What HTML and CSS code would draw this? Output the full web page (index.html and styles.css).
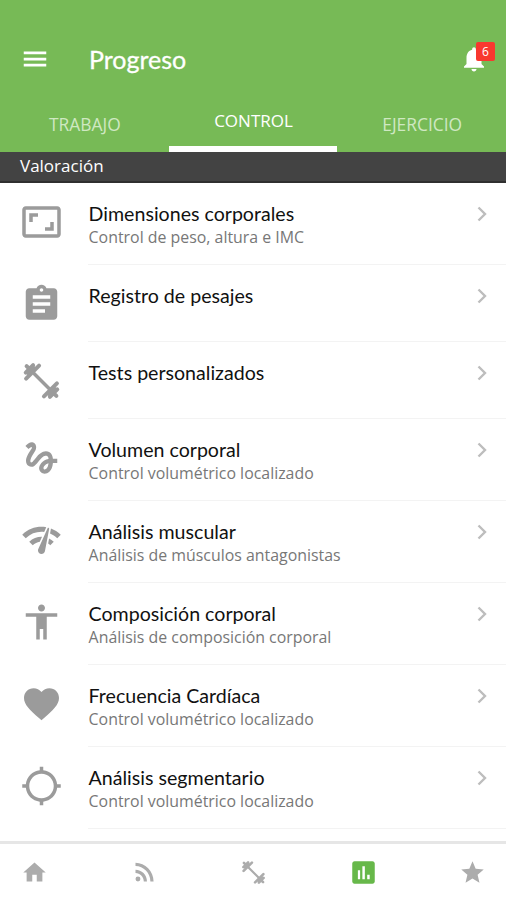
FILE: index.html
```html
<!DOCTYPE html>
<html lang="es">
<head>
  <meta charset="UTF-8" />
  <title>Progreso</title>
  <link rel="stylesheet" href="styles.css">
</head>
<body>
  <div class="app">
    <header class="header">
      <div class="topbar">
        <svg class="icon-top" viewBox="0 0 24 24"><path d="M3 18h18v-2.200H3V18zm0-4.900h18v-2.200H3v2.200zM3 6v2.200h18V6H3z"/></svg>
        <h1>Progreso</h1>
        <div class="bell">
          <svg class="icon-top" viewBox="0 0 24 24"><path d="M12 22c1.100 0 2-.9 2-2h-4c0 1.100.89 2 2 2zm6-6v-5c0-3.070-1.640-5.640-4.500-6.320V4c0-.83-.67-1.500-1.500-1.500s-1.500.67-1.500 1.500v.68C7.630 5.360 6 7.920 6 11v5l-2 2v1h16v-1l-2-2z"/></svg>
          <span class="badge">6</span>
        </div>
      </div>
      <nav class="tabs">
        <a class="tab">TRABAJO</a>
        <a class="tab active">CONTROL</a>
        <a class="tab">EJERCICIO</a>
      </nav>
    </header>

    <h2 class="section-title">Valoración</h2>

    <main class="list">
      <div class="row">
        <svg class="icon" viewBox="0 0 24 24"><path d="M19 12h-2v3h-3v2h5v-5zM7 9h3V7H5v5h2V9zm14-6H3c-1.100 0-2 .9-2 2v14c0 1.100.9 2 2 2h18c1.100 0 2-.9 2-2V5c0-1.100-.9-2-2-2zm0 16.010H3V4.990h18v14.020z"/></svg>
        <div class="row-body">
          <div><h3>Dimensiones corporales</h3><p>Control de peso, altura e IMC</p></div>
          <svg class="chevron" viewBox="0 0 10 16"><path d="M1.500 1.500L8 8l-6.500 6.500"/></svg>
        </div>
      </div>
      <div class="row single">
        <svg class="icon" viewBox="0 0 24 24"><path d="M19 3h-4.180C14.400 1.840 13.300 1 12 1c-1.300 0-2.400.84-2.820 2H5c-1.100 0-2 .9-2 2v14c0 1.100.9 2 2 2h14c1.100 0 2-.9 2-2V5c0-1.100-.9-2-2-2zm-7 0c.55 0 1 .45 1 1s-.45 1-1 1-1-.45-1-1 .45-1 1-1zm2 14H7v-2h7v2zm3-4H7v-2h10v2zm0-4H7V7h10v2z"/></svg>
        <div class="row-body">
          <div><h3>Registro de pesajes</h3></div>
          <svg class="chevron" viewBox="0 0 10 16"><path d="M1.500 1.500L8 8l-6.500 6.500"/></svg>
        </div>
      </div>
      <div class="row single">
        <svg class="icon dumbbell" viewBox="0 0 24 24"><path d="M6 6l12 12"/><path class="plates" d="M3.500 3.500L6 6M3.200 10.600L10.600 3.200M3 7.200L7.200 3M4.500 7.500L7.500 4.500M20.500 20.500L18 18M20.800 13.400L13.400 20.800M21 16.800L16.800 21M19.500 16.500L16.500 19.500"/></svg>
        <div class="row-body">
          <div><h3>Tests personalizados</h3></div>
          <svg class="chevron" viewBox="0 0 10 16"><path d="M1.500 1.500L8 8l-6.500 6.500"/></svg>
        </div>
      </div>
      <div class="row">
        <svg class="icon" viewBox="0 0 24 24"><path d="M4.590 6.890c.7-.71 1.400-1.350 1.710-1.220.5.2 0 1.030-.3 1.520-.25.42-2.860 3.890-2.860 6.310 0 1.280.48 2.340 1.340 2.980.75.56 1.740.73 2.640.46 1.070-.31 1.950-1.400 3.060-2.770 1.210-1.490 2.830-3.440 4.080-3.440 1.630 0 1.650 1.010 1.760 1.790-3.780.64-5.380 3.670-5.380 5.370 0 1.700 1.440 3.090 3.210 3.090 1.630 0 4.290-1.330 4.690-6.100H21v-2.500h-2.470c-.15-1.650-1.090-4.200-4.030-4.200-2.250 0-4.180 1.910-4.940 2.840-.58.73-2.060 2.480-2.290 2.720-.25.3-.68.84-1.110.84-.45 0-.72-.83-.36-1.920.35-1.090 1.400-2.860 1.850-3.520.78-1.140 1.300-1.920 1.300-3.280C8.950 3.690 7.310 3 6.440 3 5.120 3 3.970 4 3.720 4.250c-.36.36-.66.66-.88.93l1.750 1.710zm9.290 11.660c-.31 0-.74-.26-.74-.72 0-.6.73-2.200 2.870-2.760-.3 2.690-1.430 3.480-2.130 3.480z"/></svg>
        <div class="row-body">
          <div><h3>Volumen corporal</h3><p>Control volumétrico localizado</p></div>
          <svg class="chevron" viewBox="0 0 10 16"><path d="M1.500 1.500L8 8l-6.500 6.500"/></svg>
        </div>
      </div>
      <div class="row">
        <svg class="icon" viewBox="0 0 24 24"><path d="M15.900 5c-.17 0-.32.09-.41.23l-.07.15-5.180 11.650c-.16.29-.26.61-.26.96 0 1.110.9 2.010 2.010 2.010.96 0 1.770-.68 1.960-1.590l.01-.03L16.400 5.500c0-.28-.22-.5-.5-.5zM1 9l2 2c2.880-2.880 6.790-4.080 10.530-3.620l1.190-2.680C9.890 3.840 4.740 5.270 1 9zm20 2l2-2c-1.640-1.640-3.550-2.820-5.590-3.570l-.53 2.820c1.500.62 2.900 1.530 4.120 2.750zm-4 4l2-2c-.8-.8-1.700-1.420-2.660-1.890l-.55 2.920c.42.27.83.59 1.210.97zM5 13l2 2c1.130-1.130 2.560-1.790 4.030-2l1.280-2.880c-2.630-.08-5.300.87-7.310 2.880z"/></svg>
        <div class="row-body">
          <div><h3>Análisis muscular</h3><p>Análisis de músculos antagonistas</p></div>
          <svg class="chevron" viewBox="0 0 10 16"><path d="M1.500 1.500L8 8l-6.500 6.500"/></svg>
        </div>
      </div>
      <div class="row">
        <svg class="icon" viewBox="0 0 24 24"><path d="M12 2c1.100 0 2 .9 2 2s-.9 2-2 2-2-.9-2-2 .9-2 2-2zm9 7h-6v13h-2v-6h-2v6H9V9H3V7h18v2z"/></svg>
        <div class="row-body">
          <div><h3>Composición corporal</h3><p>Análisis de composición corporal</p></div>
          <svg class="chevron" viewBox="0 0 10 16"><path d="M1.500 1.500L8 8l-6.500 6.500"/></svg>
        </div>
      </div>
      <div class="row">
        <svg class="icon" viewBox="0 0 24 24"><path d="M12 21.350l-1.450-1.320C5.400 15.360 2 12.280 2 8.500 2 5.420 4.420 3 7.500 3c1.740 0 3.410.81 4.500 2.090C13.090 3.810 14.760 3 16.500 3 19.580 3 22 5.420 22 8.500c0 3.780-3.400 6.860-8.550 11.540L12 21.350z"/></svg>
        <div class="row-body">
          <div><h3>Frecuencia Cardíaca</h3><p>Control volumétrico localizado</p></div>
          <svg class="chevron" viewBox="0 0 10 16"><path d="M1.500 1.500L8 8l-6.500 6.500"/></svg>
        </div>
      </div>
      <div class="row">
        <svg class="icon" viewBox="0 0 24 24"><path d="M20.940 11c-.46-4.170-3.770-7.480-7.940-7.940V1h-2v2.060C6.830 3.520 3.520 6.830 3.060 11H1v2h2.060c.46 4.170 3.770 7.480 7.940 7.940V23h2v-2.060c4.170-.46 7.480-3.770 7.940-7.940H23v-2h-2.060zM12 19c-3.870 0-7-3.130-7-7s3.130-7 7-7 7 3.130 7 7-3.130 7-7 7z"/></svg>
        <div class="row-body">
          <div><h3>Análisis segmentario</h3><p>Control volumétrico localizado</p></div>
          <svg class="chevron" viewBox="0 0 10 16"><path d="M1.500 1.500L8 8l-6.500 6.500"/></svg>
        </div>
      </div>
    </main>

    <nav class="bottom-nav">
      <svg viewBox="0 0 24 24"><path d="M10 20v-6h4v6h5v-8h3L12 3 2 12h3v8z"/></svg>
      <svg viewBox="0 0 24 24"><circle cx="6.180" cy="17.820" r="2.180"/><path d="M4 3.440v2.830c7.030 0 13.230 6.200 13.230 13.730h2.830c0-9.090-7.470-16.560-16.060-16.560zm0 6.160v2.830c3.900 0 7.370 3.470 7.370 7.570h2.830c0-5.970-4.730-10.400-10.200-10.400z"/></svg>
      <svg class="dumbbell" viewBox="0 0 24 24"><path d="M6 6l12 12"/><path class="plates" d="M3.500 3.500L6 6M3.200 10.600L10.600 3.200M3 7.200L7.200 3M4.500 7.500L7.500 4.500M20.500 20.500L18 18M20.800 13.400L13.400 20.800M21 16.800L16.800 21M19.500 16.500L16.500 19.500"/></svg>
      <svg class="active" viewBox="0 0 24 24"><path d="M20 2H4c-1.100 0-2 .9-2 2v16c0 1.100.9 2 2 2h16c1.100 0 2-.9 2-2V4c0-1.100-.9-2-2-2zM9 18H7v-8h2v8zm4.200 0h-2.200V6.500h2.200V18zm4.300 0h-2.200v-4h2.200v4z"/></svg>
      <svg viewBox="0 0 24 24"><path d="M12 17.270L18.180 21l-1.640-7.030L22 9.240l-7.190-.61L12 2 9.190 8.630 2 9.240l5.460 4.730L5.820 21z"/></svg>
    </nav>
  </div>
</body>
</html>
```
FILE: styles.css
```css
* { box-sizing: border-box; }
body {
  margin: 0; background: #fff; color: #111;
  font-family: "Open Sans", "Noto Sans", sans-serif;
}
h1, h2, h3, p { margin: 0; font-weight: normal; white-space: nowrap; }
svg { display: block; flex: none; }
.app { width: 506px; height: 900px; display: flex; flex-direction: column; overflow: hidden; }

.header { background: #77ba56; height: 152px; color: #fff; padding-top: 31px; flex: none; }
.topbar {
  display: flex; align-items: center; height: 56px;
  padding: 0 17px 0 20px;
}
.topbar h1 {
  font-family: Lato, sans-serif; font-size: 25px; line-height: 30px;
  margin: 0 0 1px 39px; flex: 1; -webkit-text-stroke: 0.3px #fff;
}
.icon-top { width: 30px; height: 30px; fill: #fff; }
.bell { position: relative; }
.badge {
  position: absolute; left: 17px; top: -2px;
  width: 19px; height: 19px; border-radius: 2px;
  background: #f8382f; font-size: 12px; line-height: 20px; text-align: center;
}

.tabs { display: flex; height: 65px; }
.tab {
  flex: 1 1 0; display: flex; justify-content: center; align-items: center;
  font-size: 17.4px; color: #cfe8c2; padding: 8px 0 0 1px;
}
.tab.active { color: #fff; font-size: 17px; border-bottom: 6px solid #fff; padding-top: 7px; }

.section-title {
  background: #434343; color: #fff; height: 31px; flex: none;
  font-size: 17px; line-height: 27px; padding-left: 20px;
  border-bottom: 2px solid #303030;
}

.list { flex: 1; }
.row { display: flex; height: 82px; padding-left: 20px; }
.row.single { height: 77px; }
.icon { width: 43px; height: 42px; margin-top: 18px; fill: #9b9b9b; }
.row-body {
  flex: 1; margin-left: 25px; padding: 18px 19px 0 0;
  display: flex; justify-content: space-between; align-items: flex-start;
  border-bottom: 1px solid #f3f3f3;
}
.row h3 {
  font-family: Lato, sans-serif; font-size: 19.6px; line-height: 25px;
  padding-left: 0.6px;
}
.row p { font-size: 15.9px; line-height: 22px; color: #777; padding-left: 0.6px; }
.chevron {
  width: 10px; height: 16px; margin-top: 5px;
  fill: none; stroke: #bdbdbd; stroke-width: 2.4;
}
.dumbbell { fill: none; stroke: #9b9b9b; stroke-width: 2; stroke-linecap: round; }
.dumbbell .plates { stroke-width: 2.3; }

.bottom-nav {
  height: 59px; flex: none; border-top: 3px solid #e6e6e6;
  display: flex; justify-content: space-between; align-items: center;
  padding: 1px 20px 0 21px; background: #fff;
}
.bottom-nav svg { width: 27px; height: 27px; fill: #acacac; }
.bottom-nav .dumbbell { fill: none; stroke: #acacac; }
.bottom-nav .active { fill: #67b84a; }
```
